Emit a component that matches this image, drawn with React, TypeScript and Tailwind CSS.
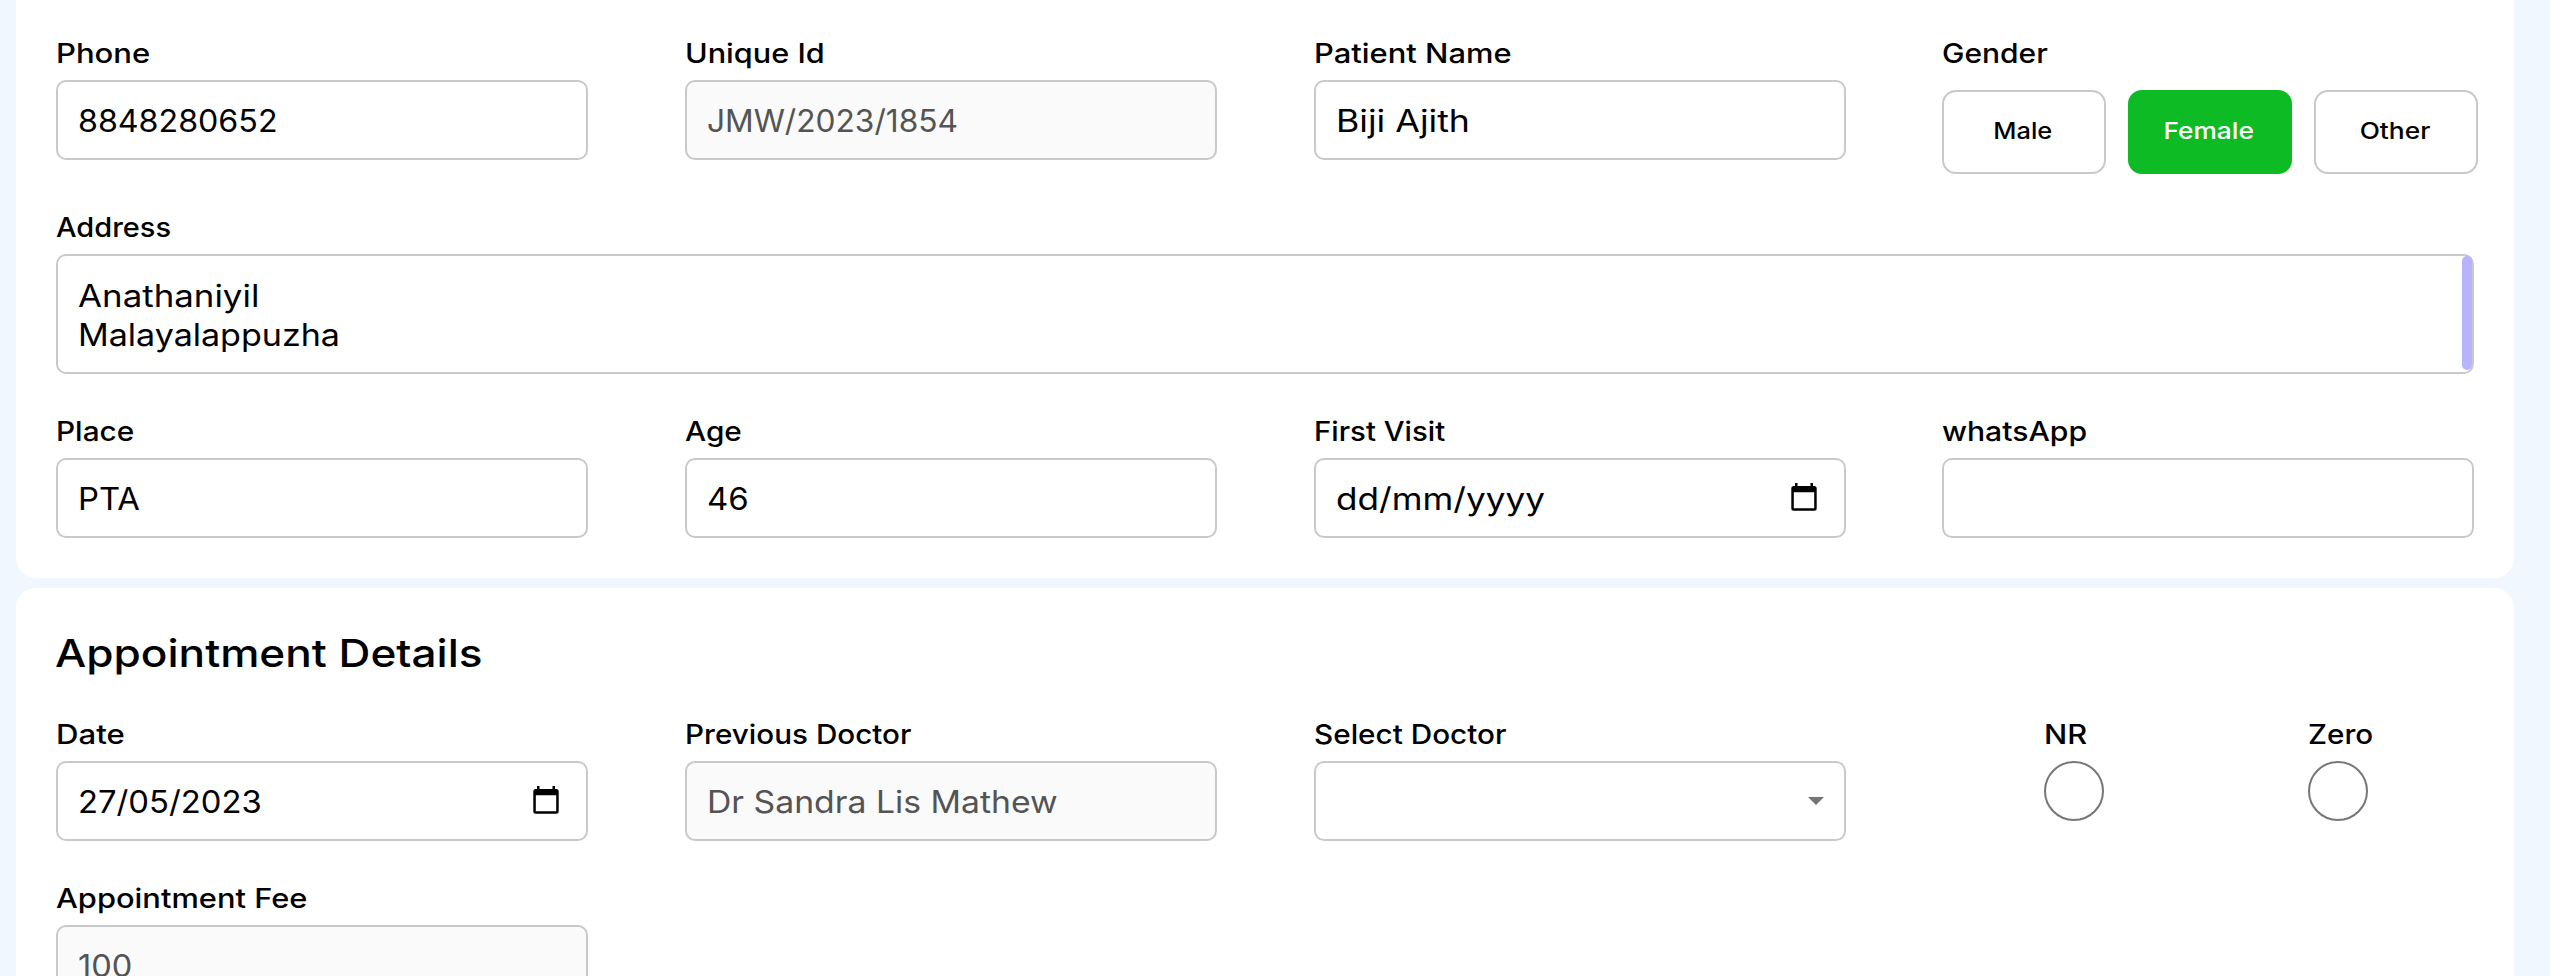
import React from "react";
import clsx from "clsx";

type TextProps = { children: React.ReactNode; stretch: string };

function Stretched({ children, stretch }: TextProps) {
  return (
    <span className={clsx("inline-block origin-left whitespace-pre", stretch)}>
      {children}
    </span>
  );
}

function Label({ children, stretch }: TextProps) {
  return (
    <div className="mb-2.5 h-[34px] pt-px text-[27px] leading-[34px] font-medium">
      <Stretched stretch={stretch}>{children}</Stretched>
    </div>
  );
}

function CalendarIcon() {
  return (
    <svg width="26" height="28" viewBox="0 0 26 28" className="shrink-0">
      <path
        fillRule="evenodd"
        fill="#000"
        d="M4 0h2.5v3h13V0H22v3h1.200A2.500 2.500 0 0 1 25.700 5.500v19.700a2.500 2.500 0 0 1-2.500 2.500H2.800a2.500 2.500 0 0 1-2.500-2.500V5.500A2.500 2.500 0 0 1 2.800 3H4zM2.800 9.300v15.900h20.400V9.300z"
      />
    </svg>
  );
}

type FieldProps = {
  label: string;
  labelStretch: string;
  value?: string;
  valueStretch?: string;
  disabled?: boolean;
  children?: React.ReactNode;
};

function Field({ label, labelStretch, value = "", valueStretch = "", disabled, children }: FieldProps) {
  return (
    <div className="w-[532px]">
      <Label stretch={labelStretch}>{label}</Label>
      <div
        className={clsx(
          "flex h-20 items-center justify-between rounded-[10px] border-2 border-[#c9c9c9] pt-px pl-5 text-[30.8px] leading-[39px]",
          disabled ? "bg-[#fafafa] text-[#545454]" : "bg-white text-black",
        )}
      >
        <Stretched stretch={valueStretch}>{value}</Stretched>
        {children}
      </div>
    </div>
  );
}

function GenderButton({ children, stretch, active }: TextProps & { active?: boolean }) {
  return (
    <button
      className={clsx(
        "flex h-[84px] w-[164px] items-center justify-center rounded-[14px] border-2 pr-[3px] pb-0.5 text-[23.1px] font-medium",
        active ? "border-[#0dbb24] bg-[#0dbb24] text-white" : "border-[#c9c9c9] bg-white text-black",
      )}
    >
      <span className={clsx("inline-block", stretch)}>{children}</span>
    </button>
  );
}

function RadioField({ label, stretch }: { label: string; stretch: string }) {
  return (
    <div className="w-[60px]">
      <Label stretch={stretch}>{label}</Label>
      <div className="size-[60px] rounded-full border-2 border-[#767676] bg-white" />
    </div>
  );
}

export default function App() {
  return (
    <div className="flex h-[976px] w-[2550px] flex-col gap-2.5 overflow-hidden bg-[#f0f7ff] pr-9 pl-4 font-['Inter',sans-serif] text-black">
      <section className="h-[578px] shrink-0 rounded-b-[20px] bg-white px-10 pt-9">
        <div className="grid h-[174px] grid-cols-[629px_629px_628px_532px] items-start">
          <Field label="Phone" labelStretch="scale-x-[1.15]" value="8848280652" valueStretch="scale-x-[1.045]" />
          <Field label="Unique Id" labelStretch="scale-x-[1.135]" value="JMW/2023/1854" valueStretch="scale-x-[1.028]" disabled />
          <Field label="Patient Name" labelStretch="scale-x-[1.145]" value="Biji Ajith" valueStretch="scale-x-[1.158]" />
          <div className="w-[532px]">
            <Label stretch="scale-x-[1.11]">Gender</Label>
            <div className="mt-5 flex w-[536px] justify-between">
              <GenderButton stretch="scale-x-[1.1]">Male</GenderButton>
              <GenderButton stretch="scale-x-[1.139]" active>Female</GenderButton>
              <GenderButton stretch="scale-x-[1.14]">Other</GenderButton>
            </div>
          </div>
        </div>

        <div className="h-[204px]">
          <Label stretch="scale-x-[1.073]">Address</Label>
          <div className="flex h-[120px] justify-between rounded-[10px] border-2 border-[#c9c9c9] bg-white">
            <div className="flex flex-col items-start pt-5 pl-5 text-[30.8px] leading-[39px]">
              <Stretched stretch="scale-x-[1.132]">Anathaniyil</Stretched>
              <Stretched stretch="scale-x-[1.105]">Malayalappuzha</Stretched>
            </div>
            <div className="h-[114px] w-2.5 rounded-[5px] bg-[#b8b4fb]" />
          </div>
        </div>

        <div className="grid grid-cols-[629px_629px_628px_532px]">
          <Field label="Place" labelStretch="scale-x-[1.104]" value="PTA" valueStretch="scale-x-[1.065]" />
          <Field label="Age" labelStretch="scale-x-[1.103]" value="46" valueStretch="scale-x-[1.07]" />
          <Field label="First Visit" labelStretch="scale-x-[1.088]" value="dd/mm/yyyy" valueStretch="scale-x-[1.141]">
            <div className="mr-[27px] pb-[3px]">
              <CalendarIcon />
            </div>
          </Field>
          <Field label="whatsApp" labelStretch="scale-x-[1.116]" />
        </div>
      </section>

      <section className="h-[480px] shrink-0 rounded-[20px] bg-white px-10 pt-10">
        <h2 className="mb-10 -ml-px h-[49px] pt-px text-[38.5px] leading-[49px] font-medium">
          <Stretched stretch="scale-x-[1.146]">Appointment Details</Stretched>
        </h2>
        <div className="grid h-[164px] grid-cols-[629px_629px_628px_532px] items-start">
          <Field label="Date" labelStretch="scale-x-[1.153]" value="27/05/2023" valueStretch="scale-x-[1.064]">
            <div className="mr-[27px] pb-[3px]">
              <CalendarIcon />
            </div>
          </Field>
          <Field label="Previous Doctor" labelStretch="scale-x-[1.098]" value="Dr Sandra Lis Mathew" valueStretch="scale-x-[1.096]" disabled />
          <Field label="Select Doctor" labelStretch="scale-x-[1.1]">
            <svg width="16" height="8" viewBox="0 0 16 8" className="mr-5 mb-px shrink-0">
              <path d="M0 0h16L8 8z" fill="#757575" />
            </svg>
          </Field>
          <div className="flex w-[532px] gap-[204px] pl-[102px]">
            <RadioField label="NR" stretch="scale-x-[1.139]" />
            <RadioField label="Zero" stretch="scale-x-[1.098]" />
          </div>
        </div>
        <Field label="Appointment Fee" labelStretch="scale-x-[1.142]" value="100" valueStretch="scale-x-[1.058]" disabled />
      </section>
    </div>
  );
}
